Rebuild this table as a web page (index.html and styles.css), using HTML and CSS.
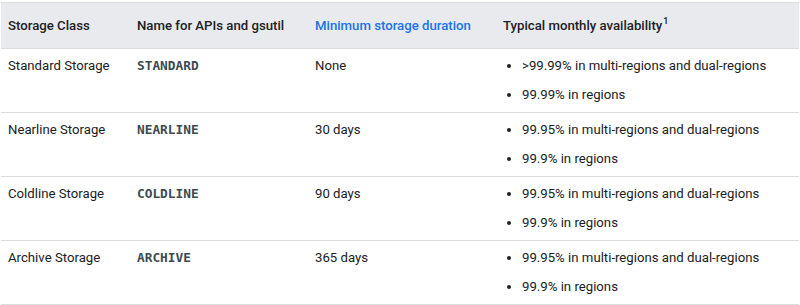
FILE: index.html
```html
<!DOCTYPE html>
<html>
<head>
<meta charset="utf-8">
<link rel="stylesheet" href="styles.css">
</head>
<body>
<table class="classes">
  <thead>
    <tr>
      <th class="c1">Storage Class</th>
      <th class="c2">Name for APIs and gsutil</th>
      <th class="c3"><span class="link">Minimum storage duration</span></th>
      <th class="c4">Typical monthly availability<sup>1</sup></th>
    </tr>
  </thead>
  <tbody>
    <tr>
      <td>Standard Storage</td>
      <td><code>STANDARD</code></td>
      <td>None</td>
      <td><ul><li>&gt;99.99% in multi-regions and dual-regions</li><li>99.99% in regions</li></ul></td>
    </tr>
    <tr>
      <td>Nearline Storage</td>
      <td><code>NEARLINE</code></td>
      <td>30 days</td>
      <td><ul><li>99.95% in multi-regions and dual-regions</li><li>99.9% in regions</li></ul></td>
    </tr>
    <tr>
      <td>Coldline Storage</td>
      <td><code>COLDLINE</code></td>
      <td>90 days</td>
      <td><ul><li>99.95% in multi-regions and dual-regions</li><li>99.9% in regions</li></ul></td>
    </tr>
    <tr>
      <td>Archive Storage</td>
      <td><code>ARCHIVE</code></td>
      <td>365 days</td>
      <td><ul><li>99.95% in multi-regions and dual-regions</li><li>99.9% in regions</li></ul></td>
    </tr>
  </tbody>
</table>
</body>
</html>
```
FILE: styles.css
```css
html, body {
  margin: 0;
  padding: 0;
  background: #ffffff;
}
body {
  padding: 2px 1px 0 1px;
  font-family: Roboto, "Liberation Sans", sans-serif;
  font-size: 13.2px;
  color: #202124;
}
.classes {
  width: 798px;
  border-collapse: collapse;
  table-layout: fixed;
  border-top: 1px solid #dadce0;
}
.classes .c1 { width: 115px; }
.classes .c2 { width: 164px; }
.classes .c3 { width: 174px; }
.classes th {
  background: #e8eaed;
  text-align: left;
  font-weight: 500;
  line-height: 20px;
  padding: 13px 7px 12px 7px;
  border-bottom: 1px solid #dadce0;
}
.classes th sup {
  font-size: 9px;
  line-height: 0;
  vertical-align: 6px;
  margin-left: 1px;
}
.link {
  color: #1a73e8;
}
.classes td {
  vertical-align: top;
  line-height: 20px;
  padding: 7px 7px 7px 7px;
  border-bottom: 1px solid #dadce0;
}
code {
  font-family: "DejaVu Sans Mono", "Liberation Mono", monospace;
  font-size: 12.8px;
  line-height: 1;
  font-weight: 600;
  color: #3c4a52;
}
ul {
  margin: 0;
  padding-left: 19px;
}
li {
  margin: 0 0 9px 0;
}
li:last-child {
  margin-bottom: 0;
}
```
